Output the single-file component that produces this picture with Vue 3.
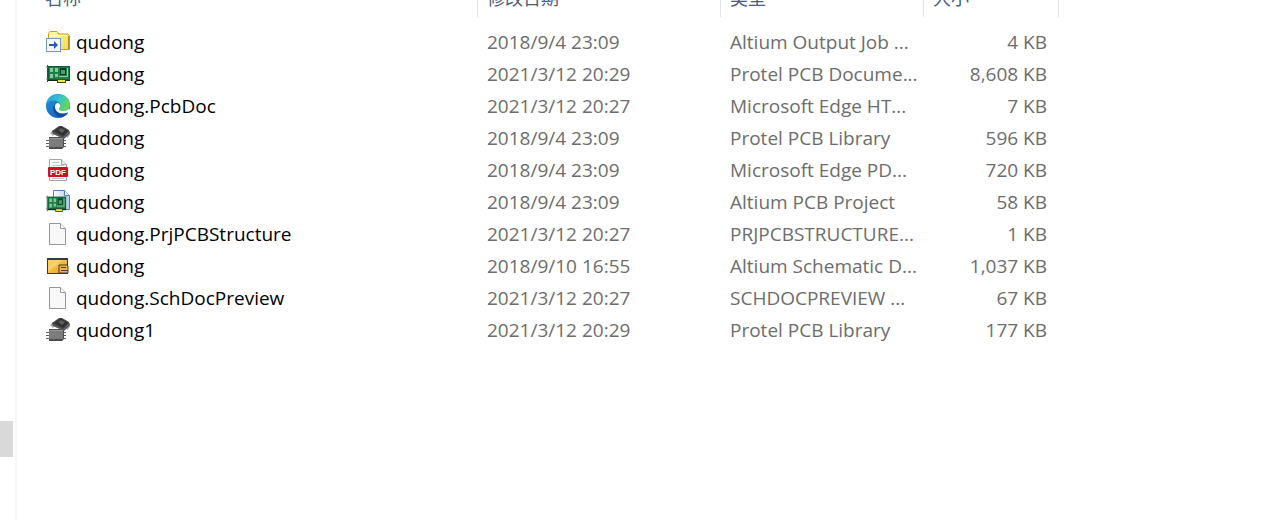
<script setup>
const files = [
  { icon: 'job', name: 'qudong', date: '2018/9/4 23:09', type: 'Altium Output Job ...', size: '4 KB' },
  { icon: 'pcb', name: 'qudong', date: '2021/3/12 20:29', type: 'Protel PCB Docume...', size: '8,608 KB' },
  { icon: 'edge', name: 'qudong.PcbDoc', date: '2021/3/12 20:27', type: 'Microsoft Edge HT...', size: '7 KB' },
  { icon: 'lib', name: 'qudong', date: '2018/9/4 23:09', type: 'Protel PCB Library', size: '596 KB' },
  { icon: 'pdf', name: 'qudong', date: '2018/9/4 23:09', type: 'Microsoft Edge PD...', size: '720 KB' },
  { icon: 'project', name: 'qudong', date: '2018/9/4 23:09', type: 'Altium PCB Project', size: '58 KB' },
  { icon: 'blank', name: 'qudong.PrjPCBStructure', date: '2021/3/12 20:27', type: 'PRJPCBSTRUCTURE...', size: '1 KB' },
  { icon: 'sch', name: 'qudong', date: '2018/9/10 16:55', type: 'Altium Schematic D...', size: '1,037 KB' },
  { icon: 'blank', name: 'qudong.SchDocPreview', date: '2021/3/12 20:27', type: 'SCHDOCPREVIEW ...', size: '67 KB' },
  { icon: 'lib', name: 'qudong1', date: '2021/3/12 20:29', type: 'Protel PCB Library', size: '177 KB' },
]
</script>

<template>
  <div class="window">
    <svg class="defs" aria-hidden="true">
      <defs>
        <linearGradient id="g-folder" x1="0" y1="0" x2="1" y2="1">
          <stop offset="0" stop-color="#fff9a8" /><stop offset="1" stop-color="#f3d95c" />
        </linearGradient>
        <linearGradient id="g-edge-top" x1="0" y1="0" x2="1" y2="0.4">
          <stop offset="0" stop-color="#2499dc" /><stop offset="0.5" stop-color="#2fc0d5" /><stop offset="1" stop-color="#65d65a" />
        </linearGradient>
        <linearGradient id="g-edge-left" x1="0" y1="0" x2="0.6" y2="1">
          <stop offset="0" stop-color="#2394dc" /><stop offset="1" stop-color="#1467c0" />
        </linearGradient>
        <linearGradient id="g-sch" x1="0" y1="0" x2="1" y2="1">
          <stop offset="0" stop-color="#ffd667" /><stop offset="1" stop-color="#e99c22" />
        </linearGradient>
        <linearGradient id="g-page" x1="0" y1="0" x2="1" y2="0">
          <stop offset="0" stop-color="#ffffff" /><stop offset="1" stop-color="#a9c8f0" />
        </linearGradient>
        <g id="board">
          <path d="M2 4h22v15H2z" fill="#0f5a34" />
          <path d="M3 5h20v12H3z" fill="#1c8048" />
          <path d="M1.500 3v17" stroke="#444" />
          <path d="M0 5h2M0 17h2" stroke="#777" />
          <path d="M4 6h3v4H4zM9 6h3v4H9zM4 12h3v4H4zM9 12h3v3H9z" fill="#86c79c" />
          <path d="M14 6h6v7h-6z" fill="#123b26" />
          <path d="M15 8h4v4h-4z" fill="#529d70" />
          <path d="M21.500 6v9M13 14.500h8" stroke="#94cd98" />
          <path d="M2 18.500h22" stroke="#0b2b1b" />
          <path d="M11 17h9v4h-9z" fill="#37501c" />
          <path d="M12 18h7v2h-7z" fill="#e5e64c" />
        </g>
      </defs>
    </svg>

    <aside class="rail"><div class="thumb"></div></aside>

    <main class="content">
      <table class="files">
        <colgroup>
          <col class="c-name" /><col class="c-date" /><col class="c-type" /><col class="c-size" />
        </colgroup>
        <thead>
          <tr>
            <th scope="col"><div class="head">名称</div></th>
            <th scope="col"><div class="head">修改日期</div></th>
            <th scope="col"><div class="head">类型</div></th>
            <th scope="col"><div class="head">大小</div></th>
          </tr>
        </thead>
        <tbody>
          <tr v-for="(f, i) in files" :key="i">
            <td>
              <div class="name">
                <svg class="icon" viewBox="0 0 24 24" aria-hidden="true">
                  <g v-if="f.icon === 'job'">
                    <path d="M2.500 19.500v-16l1.500-2h7l2 2.500h9l1.500 1.500v14z" fill="url(#g-folder)" stroke="#c4a020" />
                    <path d="M22.500 6v13.500" stroke="#a98b22" />
                    <path d="M4 5.500h17" stroke="#fffce0" />
                    <rect x="0.500" y="8.500" width="14" height="13" fill="#f4f8ff" stroke="#6f96d8" />
                    <path d="M3 15h6" stroke="#2858c8" stroke-width="2" />
                    <path d="M8 11l4 4-4 4z" fill="#2858c8" />
                  </g>
                  <use v-else-if="f.icon === 'pcb'" href="#board" />
                  <g v-else-if="f.icon === 'edge'">
                    <circle cx="12" cy="12" r="12" fill="url(#g-edge-left)" />
                    <path d="M0.300 10C1 4 6 0 12 0c7 0 12 5 12 10.500 0 4-3 6.500-6.500 6.500-3 0-4.500-1.200-4.500-2.200 0-.7 1.200-1.200 1.200-3.200C14.200 8.500 11 6.500 7.500 6.500 4 6.500 1.500 8 .3 10z" fill="url(#g-edge-top)" />
                    <path d="M9 12.500c0-2 1.300-3.500 3-3.500 1.500.6 2.300 1.600 2.300 2.800 0 1.600-1.300 2.200-1.300 3.200 0 1 1.700 2 4.500 2 2.200 0 4-.8 5.300-2.200L24 17l-1.700 1.800C20 19.500 18.500 19.500 16 19.500c-4.500 0-7-3-7-7z" fill="#fff" />
                    <path d="M8.500 10.500C5.500 14 7.500 22 15 23.600 19 22.500 21.500 20 22.300 18.200 15 22.500 8 18 8.500 10.500z" fill="#134da3" />
                  </g>
                  <g v-else-if="f.icon === 'lib'">
                    <path d="M4 7l3-3 3 1-3 5zM20 10l3-4 1 3-3 3z" fill="#aaa" />
                    <path d="M6 5l7-5h3l7 4 1 3-6 6-11-5z" fill="#4a4a4a" />
                    <path d="M8 5l6-4h2l6 4-5 5z" fill="#303030" />
                    <path d="M12 4l3-2 4 2-3 3z" fill="#5c5c5c" />
                    <path d="M6 7l11 5 6-6" fill="none" stroke="#8e8e8e" stroke-dasharray="1 1" />
                    <path d="M0 14.500h3M0 17.500h3M0 20.500h3M17 14.500h3M17 17.500h3M17 20.500h3" stroke="#5c5c5c" />
                    <path d="M3 11h14l1 1v9l-2 2H3z" fill="#4c4c4c" />
                    <path d="M3 12h14v9H3z" fill="#7b7b7b" />
                    <path d="M4 12.500h13" stroke="#9a9a9a" />
                  </g>
                  <g v-else-if="f.icon === 'pdf'">
                    <path d="M3.500 1.500h12l5 5v16h-17z" fill="#fafafa" stroke="#a5a5a5" />
                    <path d="M15.500 1.500v5h5" fill="#eee" stroke="#a5a5a5" />
                    <path d="M6 4.500h7M6 7.500h12M6 20.500h12" stroke="#c4c4c4" />
                    <rect x="2" y="9" width="20" height="10" rx="1" fill="#cf1020" />
                    <text class="pdf-label" x="12" y="17" text-anchor="middle">PDF</text>
                  </g>
                  <g v-else-if="f.icon === 'project'">
                    <path d="M7.500 0.500h11l5 5v14h-16z" fill="url(#g-page)" stroke="#5680bb" />
                    <path d="M18.500 0.500v5h5" fill="#e8f3ff" stroke="#5680bb" />
                    <use href="#board" transform="translate(0 3) scale(.84 .9)" />
                  </g>
                  <g v-else-if="f.icon === 'blank'">
                    <path d="M3.500 1.500h11l5 5v16h-16z" fill="#f8f8f8" stroke="#989898" />
                    <path d="M14.500 1.500v5h5" fill="#fff" stroke="#989898" />
                  </g>
                  <g v-else>
                    <rect x="1" y="4" width="21" height="16" fill="#38384b" />
                    <path d="M2 6h19v7h-6v6H2z" fill="url(#g-sch)" />
                    <path d="M2 18v-5L11 6h5z" fill="#ffdf8b" opacity=".45" />
                    <path d="M13 11h8l1 1v7h-9z" fill="#f0b63c" stroke="#39384b" />
                    <path d="M15 13.500h5M15 16.500h7" stroke="#4c432f" />
                  </g>
                </svg>
                <span>{{ f.name }}</span>
              </div>
            </td>
            <td>{{ f.date }}</td>
            <td>{{ f.type }}</td>
            <td class="size">{{ f.size }}</td>
          </tr>
        </tbody>
      </table>
    </main>
  </div>
</template>

<style>
body {
  background: #fff;
}
</style>

<style scoped>
.window {
  display: flex;
  min-height: 100vh;
  background: #fff;
  color: #6d6d6d;
  font-family: "Open Sans", "Noto Sans", "Noto Sans CJK SC", sans-serif;
  font-size: 19px;
  font-weight: 400;
  line-height: 32px;
}
.defs {
  position: absolute;
  width: 0;
  height: 0;
}
.rail {
  flex: none;
  width: 15px;
  padding-top: 421px;
  box-sizing: border-box;
  box-shadow: 2px 0 0 #f7f7f7;
}
.thumb {
  width: 13px;
  height: 36px;
  background: #d9d9d9;
}
.content {
  flex: 1;
  min-width: 0;
  padding-left: 21px;
}
.files {
  width: 1023px;
  table-layout: fixed;
  border-collapse: separate;
  border-spacing: 0;
}
.c-name { width: 442px; }
.c-date { width: 243px; }
.c-type { width: 203px; }
.c-size { width: 135px; }
th {
  padding: 0 0 9px;
  text-align: left;
  font-weight: 400;
}
.head {
  display: flex;
  align-items: flex-end;
  box-sizing: border-box;
  height: 17px;
  padding: 0 9px 8px;
  overflow: hidden;
  border-right: 1px solid #e2e2e2;
  color: #4c607a;
  font-family: "Noto Sans CJK SC", sans-serif;
  font-size: 18px;
  font-weight: 400;
  line-height: 24px;
}
td {
  height: 32px;
  padding: 0 9px;
  white-space: nowrap;
}
td:first-child {
  padding-left: 10px;
}
.size {
  padding-right: 12px;
  text-align: right;
}
.name {
  display: flex;
  align-items: center;
  gap: 6px;
  color: #000;
}
.icon {
  flex: none;
  width: 24px;
  height: 24px;
}
.pdf-label {
  fill: #fff;
  font: 700 8px "Liberation Sans", sans-serif;
}
</style>
